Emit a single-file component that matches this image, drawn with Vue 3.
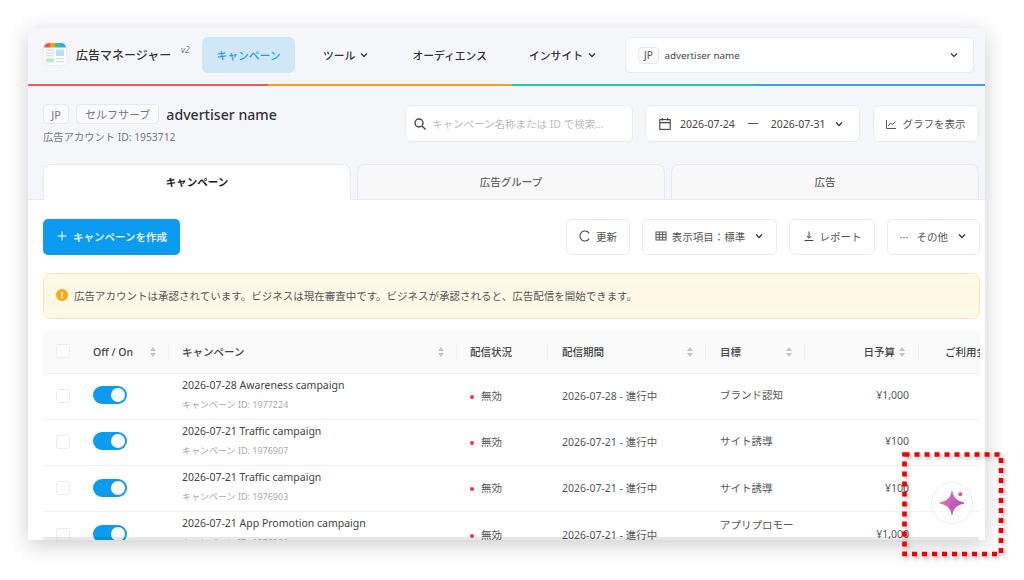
<template>
  <div class="stage">
    <div class="window">
      <!-- ヘッダー -->
      <header class="topbar">
        <svg class="logo" width="24" height="24" viewBox="0 0 24 24">
          <defs>
            <clipPath id="logoClip"><rect x="1" y="1" width="22" height="22" rx="5" /></clipPath>
          </defs>
          <g clip-path="url(#logoClip)">
            <rect x="1" y="1" width="22" height="22" fill="#fff" />
            <rect x="1" y="1" width="6" height="4.5" fill="#f4514f" />
            <rect x="7" y="1" width="5" height="4.5" fill="#fb9d1c" />
            <rect x="12" y="1" width="5" height="4.5" fill="#3cc47c" />
            <rect x="17" y="1" width="6" height="4.5" fill="#3d9df0" />
            <rect x="3" y="7.5" width="8" height="1.3" fill="#d5dbe3" />
            <rect x="3" y="10.5" width="8" height="1.3" fill="#d5dbe3" />
            <rect x="3" y="13.2" width="8" height="1.3" fill="#d5dbe3" />
            <rect x="13" y="7.5" width="8" height="6.5" fill="#b3e0f5" />
            <rect x="3" y="16.3" width="8" height="4" fill="#b7ead0" />
            <rect x="13" y="16" width="8" height="1.3" fill="#d5dbe3" />
            <rect x="13" y="19" width="8" height="1.3" fill="#d5dbe3" />
          </g>
        </svg>
        <span class="brand">広告マネージャー</span>
        <sup class="ver">v2</sup>
        <nav class="nav">
          <a class="nav-item active">キャンペーン</a>
          <a class="nav-item tools">ツール
            <svg class="chev" viewBox="0 0 10 10"><path d="M2 3.5 5 6.5 8 3.5" /></svg>
          </a>
          <a class="nav-item audience">オーディエンス</a>
          <a class="nav-item insight">インサイト
            <svg class="chev" viewBox="0 0 10 10"><path d="M2 3.5 5 6.5 8 3.5" /></svg>
          </a>
        </nav>
        <div class="adv-select">
          <span class="chip small">JP</span>
          <span class="adv-name">advertiser name</span>
          <svg class="chev thin" viewBox="0 0 10 10"><path d="M2 3.5 5 6.5 8 3.5" /></svg>
        </div>
      </header>
      <div class="rainbow"><i class="r1"></i><i class="r2"></i><i class="r3"></i><i class="r4"></i></div>

      <!-- アカウント情報 -->
      <section class="account">
        <div class="acc-info">
          <div class="acc-title">
            <span class="chip jp">JP</span>
            <span class="chip">セルフサーブ</span>
            <span class="acc-name">advertiser name</span>
          </div>
          <div class="acc-id">広告アカウント ID: 1953712</div>
        </div>
        <div class="search">
          <svg width="14" height="14" viewBox="0 0 14 14" fill="none" stroke="#444" stroke-width="1.4"><circle cx="6" cy="6" r="4" /><path d="M9 9l3.6 3.6" /></svg>
          <span>キャンペーン名称または ID で検索...</span>
        </div>
        <div class="date">
          <svg width="14" height="14" viewBox="0 0 14 14" fill="none" stroke="#444" stroke-width="1.1"><rect x="1.8" y="2.6" width="10.4" height="9.8" /><path d="M1.8 5.6h10.4M4.5 1v2.6M9.5 1v2.6" /></svg>
          <span class="d1">2026-07-24</span>
          <span class="dash"></span>
          <span class="d2">2026-07-31</span>
          <svg class="chev" viewBox="0 0 10 10"><path d="M2 3.5 5 6.5 8 3.5" /></svg>
        </div>
        <div class="graph">
          <svg width="12" height="12" viewBox="0 0 12 12" fill="none" stroke="#555" stroke-width="1"><path d="M1.5 2v8.5H11M3 8l2.5-3 2 1.5L10.5 3.5" /></svg>
          <span>グラフを表示</span>
        </div>
      </section>

      <!-- タブ -->
      <div class="tabs">
        <div class="tab on">キャンペーン</div>
        <div class="tab">広告グループ</div>
        <div class="tab">広告</div>
      </div>

      <section class="panel">
        <div class="actions">
          <button class="create">
            <svg width="12" height="12" viewBox="0 0 12 12" stroke="#fff" stroke-width="1"><path d="M6 1.5v9M1.5 6h9" /></svg>
            キャンペーンを作成
          </button>
          <div class="action-right">
            <button class="act w-refresh">
              <svg width="12" height="12" viewBox="0 0 12 12" fill="none" stroke="#444" stroke-width="1.1"><path d="M10.2 3.4A5 5 0 1 0 10.2 8.6" /></svg>
              更新
            </button>
            <button class="act w-cols">
              <svg width="12" height="12" viewBox="0 0 12 12" fill="none" stroke="#555" stroke-width="1"><rect x="1" y="2" width="10" height="8" /><path d="M1 4.6h10M1 7.3h10M4.3 2v8M7.6 2v8" /></svg>
              表示項目：標準
              <svg class="chev" viewBox="0 0 10 10"><path d="M2 3.5 5 6.5 8 3.5" /></svg>
            </button>
            <button class="act w-report">
              <svg width="12" height="12" viewBox="0 0 12 12" fill="none" stroke="#444" stroke-width="1"><path d="M6 1.5v6.5M3.8 6 6 8.2 8.2 6M1.5 10.5h9" /></svg>
              レポート
            </button>
            <button class="act w-more">
              <span class="dots">···</span>
              その他
              <svg class="chev" viewBox="0 0 10 10"><path d="M2 3.5 5 6.5 8 3.5" /></svg>
            </button>
          </div>
        </div>

        <div class="notice">
          <span class="notice-icon">!</span>
          広告アカウントは承認されています。ビジネスは現在審査中です。ビジネスが承認されると、広告配信を開始できます。
        </div>

        <div class="table-wrap">
          <table>
            <colgroup>
              <col style="width: 38px" />
              <col style="width: 88px" />
              <col style="width: 288px" />
              <col style="width: 91px" />
              <col style="width: 158px" />
              <col style="width: 99px" />
              <col style="width: 114px" />
              <col style="width: 120px" />
            </colgroup>
            <thead>
              <tr>
                <th class="c-check"><span class="box"></span></th>
                <th>
                  <div class="th-in">Off / On
                    <svg class="sort" viewBox="0 0 8 12"><path d="M4 1 7 5H1Z" /><path d="M4 11 1 7H7Z" /></svg>
                  </div>
                </th>
                <th>
                  <div class="th-in">キャンペーン
                    <svg class="sort" viewBox="0 0 8 12"><path d="M4 1 7 5H1Z" /><path d="M4 11 1 7H7Z" /></svg>
                  </div>
                </th>
                <th><div class="th-in">配信状況</div></th>
                <th>
                  <div class="th-in wide">配信期間
                    <svg class="sort" viewBox="0 0 8 12"><path d="M4 1 7 5H1Z" /><path d="M4 11 1 7H7Z" /></svg>
                  </div>
                </th>
                <th>
                  <div class="th-in wide">目標
                    <svg class="sort" viewBox="0 0 8 12"><path d="M4 1 7 5H1Z" /><path d="M4 11 1 7H7Z" /></svg>
                  </div>
                </th>
                <th>
                  <div class="th-in budget">日予算
                    <svg class="sort" viewBox="0 0 8 12"><path d="M4 1 7 5H1Z" /><path d="M4 11 1 7H7Z" /></svg>
                  </div>
                </th>
                <th class="last"><div class="th-in usage">ご利用金額</div></th>
              </tr>
            </thead>
            <tbody>
              <tr v-for="row in rows" :key="row.id">
                <td class="c-check"><span class="box"></span></td>
                <td><span class="switch"><i></i></span></td>
                <td class="c-name">
                  <div class="name">{{ row.name }}</div>
                  <div class="cid">キャンペーン ID: {{ row.id }}</div>
                </td>
                <td><span class="dot"></span>無効</td>
                <td class="wide">{{ row.period }}</td>
                <td class="c-goal wide">
                  <div :class="{ twoline: row.goal.length > 7 }">{{ row.goal }}</div>
                </td>
                <td class="c-money">{{ row.budget }}</td>
                <td></td>
              </tr>
            </tbody>
          </table>
        </div>
      </section>
      <div class="hscroll"></div>

      <div class="fab">
        <svg width="28" height="28" viewBox="0 0 28 28">
          <defs>
            <linearGradient id="spark" gradientUnits="userSpaceOnUse" x1="2" y1="10" x2="26" y2="17">
              <stop offset="0" stop-color="#f0709a" />
              <stop offset="1" stop-color="#9c4fd8" />
            </linearGradient>
          </defs>
          <path d="M14 2.5C15.2 8.5 18 12 26 14 18 16 15.2 19.5 14 25.5 12.8 19.5 10 16 2 14 10 12 12.8 8.5 14 2.5Z" fill="url(#spark)" stroke="url(#spark)" stroke-width="1" stroke-linejoin="round" />
          <circle cx="22.3" cy="5.3" r="2" fill="#c85ac8" />
        </svg>
      </div>
    </div>

    <!-- 赤い点線の注釈 -->
    <svg class="annot" width="106" height="110" viewBox="0 0 106 110">
      <rect x="2.5" y="2.5" width="96.5" height="99.5" fill="none" stroke="#f00000" stroke-width="4.6" stroke-dasharray="5 5" />
    </svg>
  </div>
</template>

<script setup>
const rows = [
  { id: 1977224, name: '2026-07-28 Awareness campaign', period: '2026-07-28 - 進行中', goal: 'ブランド認知', budget: '¥1,000' },
  { id: 1976907, name: '2026-07-21 Traffic campaign', period: '2026-07-21 - 進行中', goal: 'サイト誘導', budget: '¥100' },
  { id: 1976903, name: '2026-07-21 Traffic campaign', period: '2026-07-21 - 進行中', goal: 'サイト誘導', budget: '¥100' },
  { id: 1976901, name: '2026-07-21 App Promotion campaign', period: '2026-07-21 - 進行中', goal: 'アプリプロモーション', budget: '¥1,000' }
]
</script>

<style>
html, body {
  margin: 0;
  background: #fff;
  overflow: hidden;
}
</style>

<style scoped>
.stage {
  position: relative;
  width: 1024px;
  height: 580px;
  padding: 28px 0 0 28px;
  box-sizing: border-box;
  font-family: "Noto Sans", "Noto Sans CJK JP", sans-serif;
  color: #333;
  overflow: hidden;
}
.window {
  position: relative;
  width: 957px;
  height: 512px;
  background: #f4f6fa;
  overflow: hidden;
  box-shadow: 0 5px 20px rgba(0, 0, 0, 0.2);
}

/* header */
.topbar {
  height: 55.5px;
  display: flex;
  align-items: center;
  padding: 0 11px 1.5px 15px;
  box-sizing: border-box;
}
.logo {
  flex: none;
  margin-right: 9px;
  margin-top: -3px;
  filter: drop-shadow(0 0 1px rgba(0, 0, 0, 0.1));
}
.brand {
  width: 96px;
  font-size: 12px;
  font-weight: 500;
  color: #333;
  white-space: nowrap;
}
.ver {
  font-size: 8.5px;
  font-style: italic;
  color: #777;
  margin: -11px 0 0 9px;
  width: 13px;
}
.nav {
  display: flex;
  align-items: center;
  margin-left: 8px;
}
.nav-item {
  height: 36px;
  display: flex;
  align-items: center;
  font-size: 10.8px;
  font-weight: 500;
  color: #333;
  white-space: nowrap;
}
.nav-item.active {
  width: 93px;
  justify-content: center;
  background: #d0e7f8;
  border-radius: 6px;
  color: #1b9cec;
}
.tools { margin-left: 28px; gap: 4px; }
.audience { margin-left: 43px; }
.insight { margin-left: 42px; gap: 4px; }
.chev {
  width: 10px;
  height: 10px;
  flex: none;
  fill: none;
  stroke: #333;
  stroke-width: 1.3;
}
.chev.thin { stroke-width: 1.1; }
.adv-select {
  margin-left: auto;
  width: 349px;
  height: 36px;
  box-sizing: border-box;
  background: #fff;
  border: 1px solid #e8eaee;
  border-radius: 6px;
  display: flex;
  align-items: center;
  padding: 0 14px 0 12px;
}
.adv-name {
  font-size: 9.8px;
  margin-left: 5.5px;
  flex: 1;
  color: #444;
}
.chip {
  display: inline-flex;
  align-items: center;
  justify-content: center;
  height: 20px;
  padding: 0 8px;
  box-sizing: border-box;
  border: 1px solid #e6e8ec;
  border-radius: 4px;
  background: #fafafa;
  font-size: 11px;
  color: #777;
}
.chip.jp {
  width: 26px;
  padding: 0;
}
.chip.small {
  height: 17px;
  width: 21px;
  padding: 0;
  font-size: 10px;
  color: #555;
}
.rainbow {
  display: flex;
  height: 2px;
}
.rainbow i { display: block; height: 100%; }
.r1 { width: 240px; background: #fb5560; }
.r2 { width: 244px; background: #fb9d1c; }
.r3 { width: 241px; background: #1fcf8f; }
.r4 { width: 232px; background: #3aa0f2; }

/* account row */
.account {
  height: 78.5px;
  display: flex;
  align-items: flex-start;
  padding: 19.5px 0 0 15px;
  box-sizing: border-box;
}
.acc-info { width: 362px; }
.acc-title {
  display: flex;
  align-items: center;
  gap: 7px;
  height: 20px;
  margin-top: -1px;
}
.acc-name {
  font-size: 14.1px;
  font-weight: 500;
  color: #333;
}
.acc-id {
  font-size: 10.3px;
  color: #777;
  margin-top: 5px;
}
.search, .date, .graph {
  height: 37px;
  box-sizing: border-box;
  background: #fff;
  border: 1px solid #e8eaee;
  border-radius: 6px;
  display: flex;
  align-items: center;
  font-size: 10.5px;
}
.search {
  width: 228px;
  padding-left: 7px;
  gap: 5px;
  color: #bbb;
}
.date {
  width: 215px;
  margin-left: 12px;
  padding-left: 12px;
  color: #444;
}
.d1 { margin-left: 8px; }
.dash {
  width: 10px;
  height: 1px;
  background: #555;
  margin: 0 13px;
}
.date .chev { margin-left: 8px; }
.graph {
  width: 106px;
  margin-left: 13px;
  justify-content: center;
  gap: 6px;
  padding-right: 2px;
  color: #555;
}

/* tabs */
.tabs {
  height: 36px;
  display: flex;
  gap: 6px;
  padding-left: 15px;
  box-sizing: border-box;
  border-bottom: 1px solid #e8eaee;
}
.tab {
  width: 308px;
  box-sizing: border-box;
  height: 36px;
  padding-bottom: 2px;
  background: #f8f8f9;
  border: 1px solid #e8eaee;
  border-bottom: 0;
  border-radius: 8px 8px 0 0;
  display: flex;
  align-items: center;
  justify-content: center;
  font-size: 10.5px;
  font-weight: 500;
  color: #666;
}
.tab:not(.on) { height: 35px; padding-bottom: 1px; }
.tab.on {
  background: #fff;
  color: #222;
  font-weight: 700;
  position: relative;
  z-index: 1;
}

/* panel */
.panel {
  background: #fff;
  height: 340px;
  padding: 19px 5.5px 0 15px;
  box-sizing: border-box;
  overflow: hidden;
}
.actions {
  display: flex;
  justify-content: space-between;
}
button {
  font: inherit;
  height: 36px;
  display: flex;
  align-items: center;
  box-sizing: border-box;
  cursor: pointer;
}
.create {
  width: 137px;
  background: #0c9bef;
  border: 0;
  border-radius: 5px;
  color: #fff;
  font-size: 10.5px;
  font-weight: 500;
  padding: 0 0 2px 13px;
  gap: 5px;
}
.action-right {
  display: flex;
  gap: 12px;
}
.act {
  background: #fff;
  border: 1px solid #e8eaee;
  border-radius: 6px;
  font-size: 10.5px;
  color: #555;
  justify-content: center;
  gap: 5px;
  padding: 0 0 2px;
}
.w-refresh { width: 64px; }
.w-cols { width: 135px; }
.w-cols .chev { margin-left: 4px; }
.w-report { width: 86px; }
.w-more { width: 92.5px; }
.w-more .chev { margin-left: 4px; }
.dots { color: #666; font-size: 11px; margin-right: 3px; }
.notice {
  margin-top: 18px;
  height: 46px;
  box-sizing: border-box;
  display: flex;
  align-items: center;
  gap: 6px;
  padding: 0 0 2px 12px;
  background: #fef9e6;
  border: 1px solid #fde6a4;
  border-radius: 7px;
  font-size: 10.5px;
  color: #555;
}
.notice-icon {
  width: 12px;
  height: 12px;
  border-radius: 50%;
  background: #f9a912;
  color: #fff;
  font-size: 9px;
  font-weight: 700;
  line-height: 12px;
  text-align: center;
}

/* table */
.table-wrap {
  margin-top: 12px;
  overflow: hidden;
}
table {
  table-layout: fixed;
  width: 996px;
  border-collapse: collapse;
  font-size: 10.5px;
  color: #555;
}
th {
  height: 42px;
  padding: 0;
  background: #fafafa;
  font-size: 10.5px;
  font-weight: 500;
  color: #444;
  text-align: left;
  border-bottom: 1px solid #f2f2f2;
  box-sizing: border-box;
}
.th-in {
  display: flex;
  align-items: center;
  justify-content: space-between;
  height: 14px;
  padding: 0 11.5px 0 13px;
  border-right: 1px solid #f0f0f0;
  white-space: nowrap;
}
.th-in.wide { padding-left: 14px; }
th:nth-child(2) .th-in { padding-left: 12px; }
.budget {
  justify-content: flex-end;
  gap: 3px;
  padding-right: 12px;
}
.usage {
  padding-left: 26px;
  border: 0;
}
.sort {
  width: 8px;
  height: 12px;
  flex: none;
  fill: #c4c4c4;
}
td {
  height: 46.3px;
  padding: 0 13px 2px;
  box-sizing: border-box;
  border-bottom: 1px solid #f2f2f2;
  white-space: nowrap;
}
td.wide { padding-left: 14px; }
td.c-check, th.c-check {
  padding: 0 0 1px;
  text-align: center;
}
td:nth-child(2) { padding-left: 12px; }
.box {
  display: block;
  width: 12px;
  height: 12px;
  margin-left: 12.5px;
  border: 1px solid #ebebeb;
  border-radius: 3px;
  background: #fff;
}
.switch {
  display: block;
  position: relative;
  width: 34px;
  height: 18px;
  border-radius: 9px;
  background: #0c9bef;
}
.switch i {
  position: absolute;
  right: 2px;
  top: 2px;
  width: 14px;
  height: 14px;
  border-radius: 50%;
  background: #fff;
}
.c-name { vertical-align: top; }
.name {
  font-size: 10.5px;
  color: #444;
  line-height: 14px;
  margin-top: 4px;
}
.cid {
  font-size: 9px;
  color: #aaa;
  line-height: 12px;
  margin-top: 7px;
}
.dot {
  display: inline-block;
  width: 4px;
  height: 4px;
  border-radius: 50%;
  background: #f5333f;
  margin-right: 7px;
  vertical-align: middle;
}
.c-goal {
  white-space: normal;
  line-height: 22px;
  padding-right: 10px;
}
.twoline {
  position: relative;
  top: 2px;
}
.c-money {
  text-align: right;
  padding-right: 10px;
}

.hscroll {
  position: absolute;
  left: 15px;
  right: 6px;
  bottom: 0;
  height: 3px;
  background: rgba(0, 0, 0, 0.09);
}
.fab {
  position: absolute;
  left: 903px;
  top: 454px;
  width: 42px;
  height: 42px;
  box-sizing: border-box;
  border-radius: 50%;
  background: #fff;
  border: 1px solid #ececec;
  display: flex;
  align-items: center;
  justify-content: center;
}
.annot {
  position: absolute;
  left: 901.5px;
  top: 452px;
  filter: drop-shadow(2px 2px 2px rgba(0, 0, 0, 0.3));
}
</style>
